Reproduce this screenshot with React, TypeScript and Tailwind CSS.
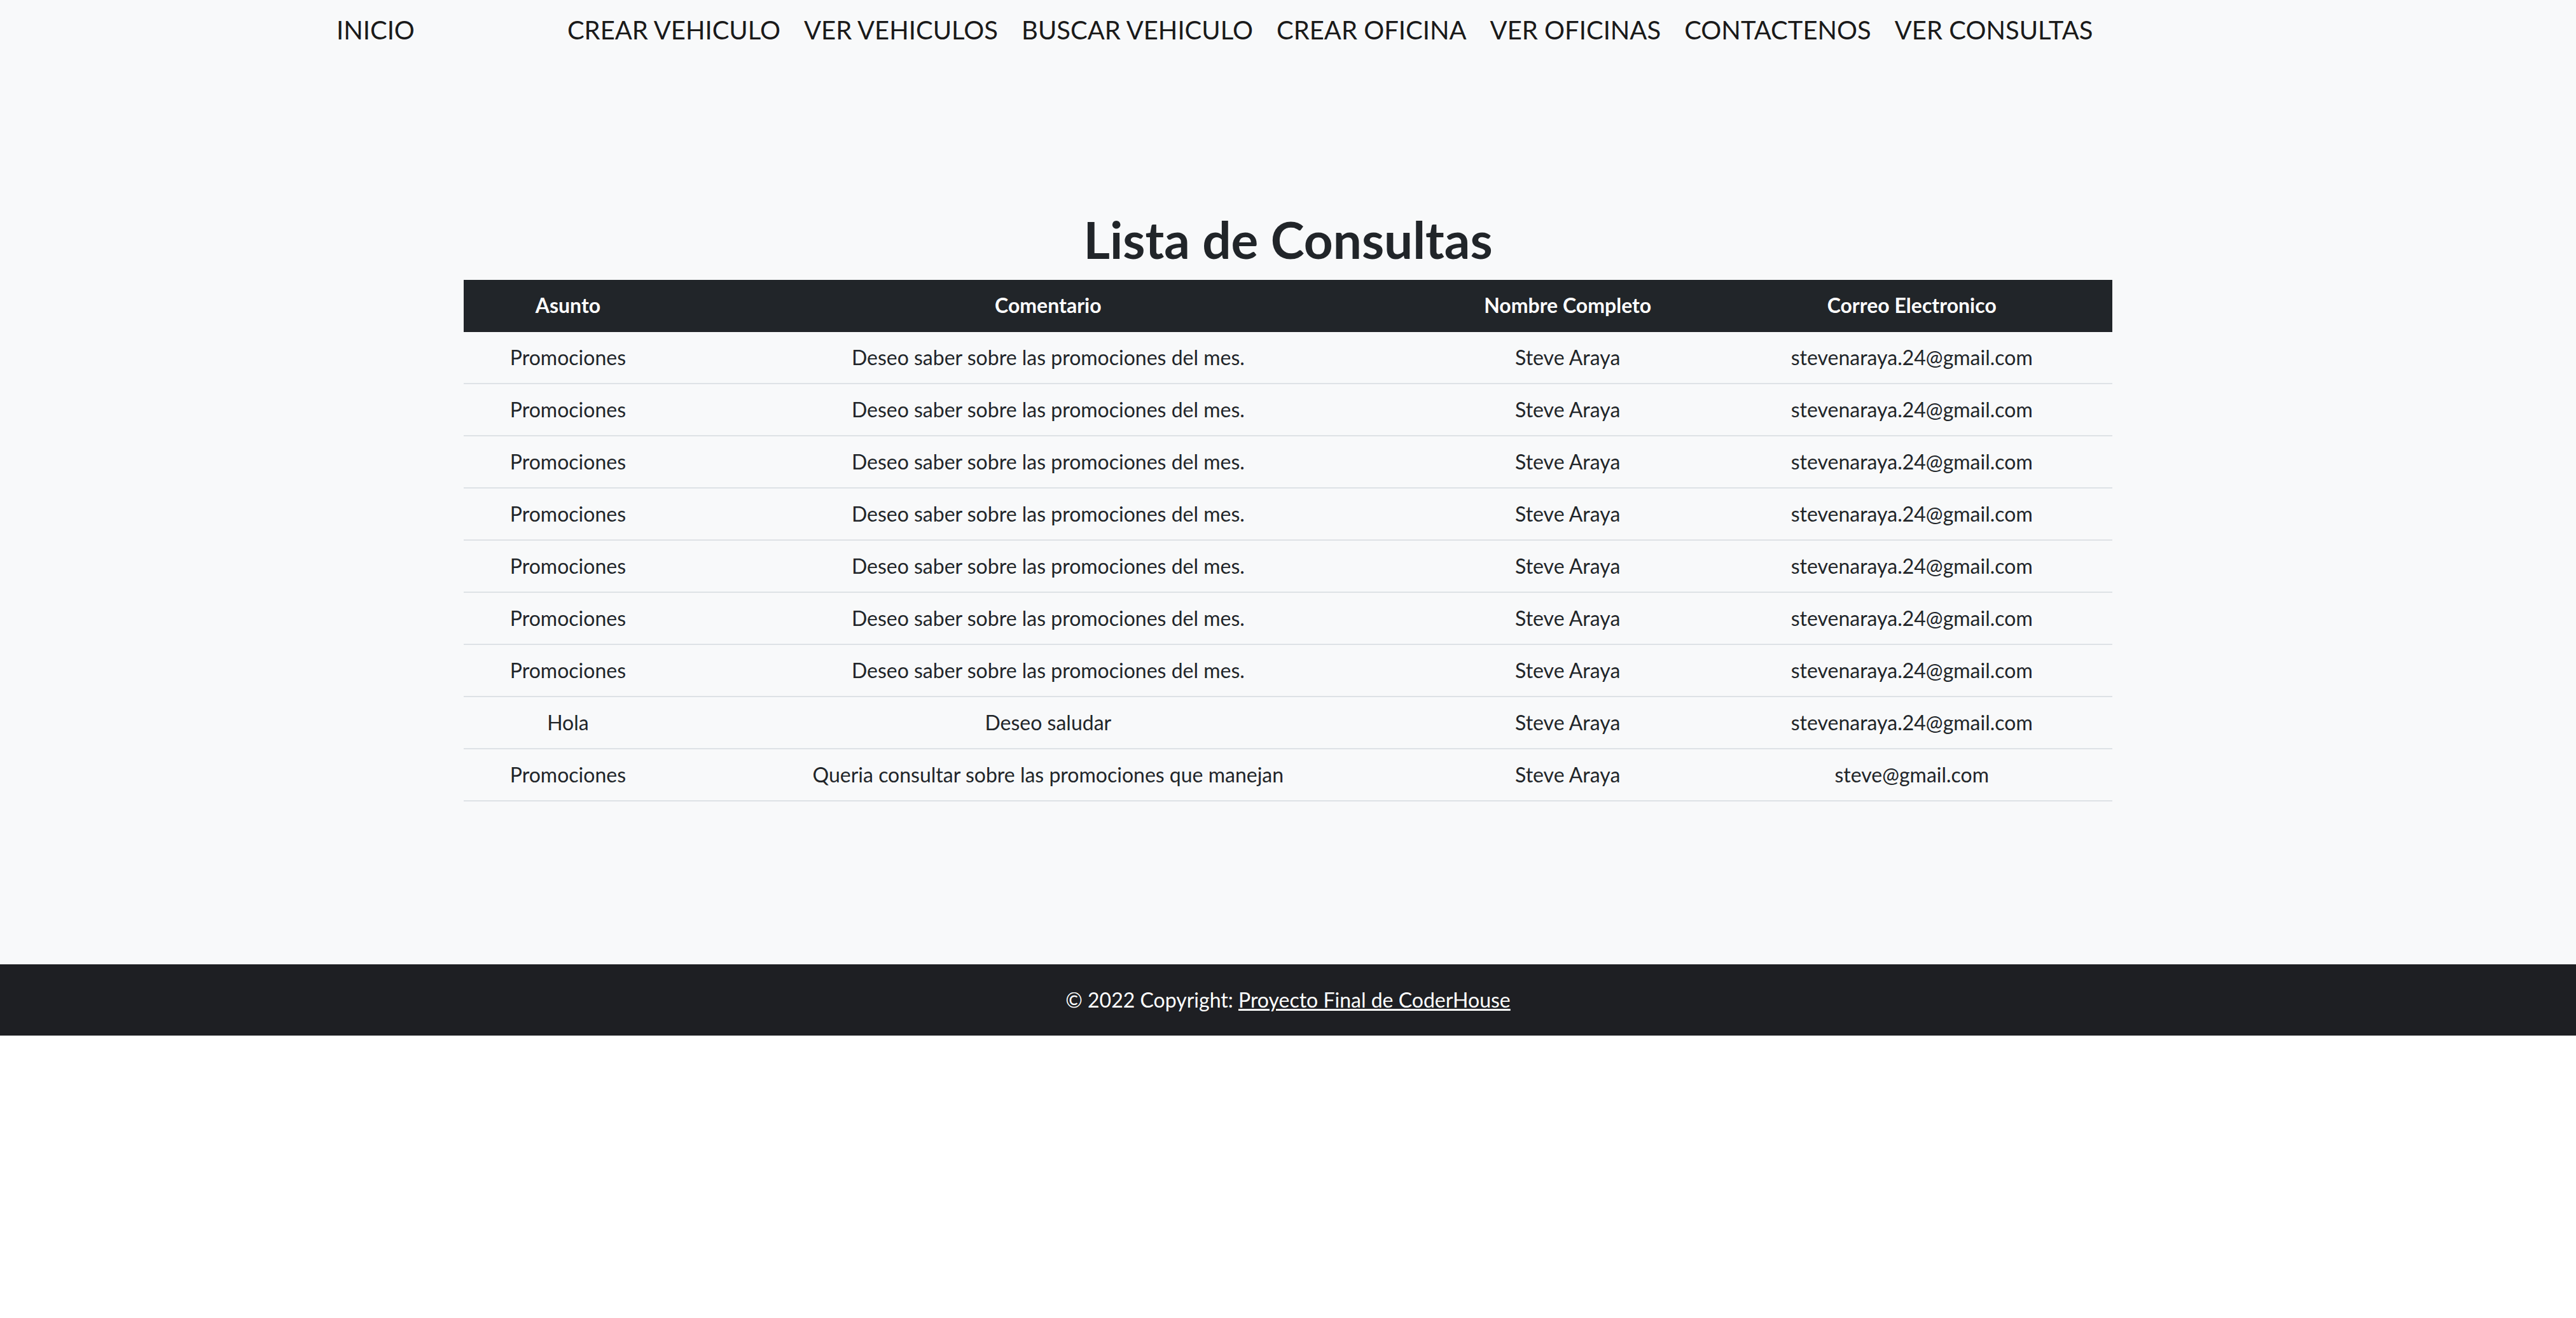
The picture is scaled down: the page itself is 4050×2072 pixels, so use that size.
const navLinks = [
  'CREAR VEHICULO',
  'VER VEHICULOS',
  'BUSCAR VEHICULO',
  'CREAR OFICINA',
  'VER OFICINAS',
  'CONTACTENOS',
  'VER CONSULTAS',
];

const promo = {
  asunto: 'Promociones',
  comentario: 'Deseo saber sobre las promociones del mes.',
  nombre: 'Steve Araya',
  correo: 'stevenaraya.24@gmail.com',
};

const consultas = [
  promo,
  promo,
  promo,
  promo,
  promo,
  promo,
  promo,
  { ...promo, asunto: 'Hola', comentario: 'Deseo saludar' },
  {
    asunto: 'Promociones',
    comentario: 'Queria consultar sobre las promociones que manejan',
    nombre: 'Steve Araya',
    correo: 'steve@gmail.com',
  },
];

export default function App() {
  return (
    <div className="min-h-[2072px] bg-white font-['Lato',sans-serif] text-[#212529]">
      <div className="bg-[#f8f9fa]">
        <nav className="flex pt-[17px] pl-[529px] text-[40px] leading-[60px] text-[#1a1a1a]">
          <a href="#" className="mr-[240px]">INICIO</a>
          <div className="flex gap-[37px]">
            {navLinks.map((link) => (
              <a key={link} href="#">
                {link}
              </a>
            ))}
          </div>
        </nav>

        <main className="mx-auto w-[2640px] px-[24px] pt-[251px] pb-[256px]">
          <h1 className="mb-[16px] text-center text-[80px] font-bold leading-[1.2]">Lista de Consultas</h1>
          <table className="w-full border-collapse text-center text-[32px] leading-[48px]">
            <thead>
              <tr className="bg-[#212529] text-white">
                <th className="p-[16px] font-bold">Asunto</th>
                <th className="p-[16px] font-bold">Comentario</th>
                <th className="p-[16px] font-bold">Nombre Completo</th>
                <th className="p-[16px] font-bold">Correo Electronico</th>
              </tr>
            </thead>
            <tbody className="border-t-[2px] border-[#212529]">
              {consultas.map((c, i) => (
                <tr key={i} className="border-b-[2px] border-[#dee2e6]">
                  <td className="p-[16px]">{c.asunto}</td>
                  <td className="p-[16px]">{c.comentario}</td>
                  <td className="p-[16px]">{c.nombre}</td>
                  <td className="p-[16px]">{c.correo}</td>
                </tr>
              ))}
            </tbody>
          </table>
        </main>
      </div>

      <footer className="bg-[#1e1f23] py-[32px] text-center text-[32px] leading-[48px] text-white">
        © 2022 Copyright: <a href="#" className="underline">Proyecto Final de CoderHouse</a>
      </footer>
    </div>
  );
}
